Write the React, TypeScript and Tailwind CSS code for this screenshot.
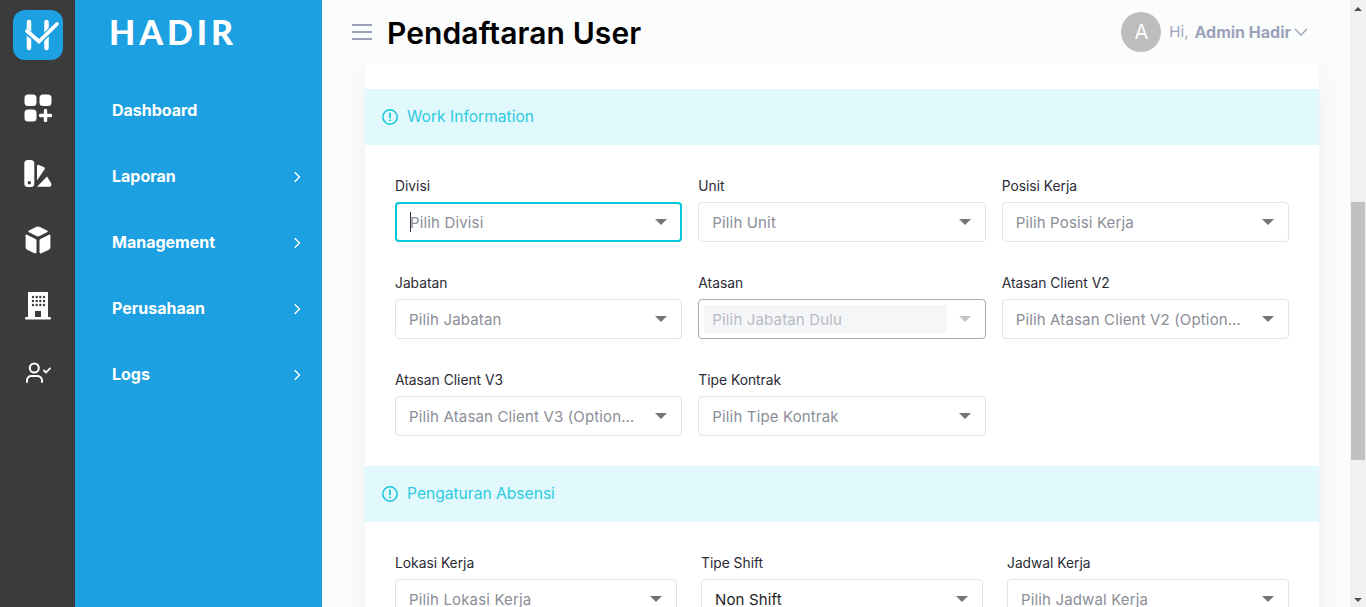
const font = { fontFamily: '"Inter", "Noto Sans", sans-serif' };

function Select({ label, text, focus, disabled, value }: { label: string; text: string; focus?: boolean; disabled?: boolean; value?: boolean }) {
  const box = focus
    ? "border-2 border-[#00c5dc] pl-[13px] pr-[13px]"
    : disabled
      ? "border border-[#a8abb2] pl-[5px] pr-[14px]"
      : "border border-[#e2e3ea] pl-[13px] pr-[14px]";
  return (
    <div className="flex min-w-0 flex-col">
      <label className="mb-[5px] h-[20px] text-[13.8px] leading-[19px] text-[#2b2b35]">{label}</label>
      <div className={`flex h-[40px] items-center rounded-[4px] bg-white ${box}`}>
        {focus && <span className="-mr-px h-[20px] w-px bg-[#333]" />}
        <span
          className={`min-w-0 flex-1 truncate pt-[2px] text-[15px] tracking-[0.15px] ${
            disabled
              ? "mr-[6px] flex h-[28px] items-center rounded-[2px] bg-[#f5f6f8] pl-[8px] text-[#b9bcc5]"
              : value
                ? "text-[#1e1e22]"
                : "text-[#8b8e97]"
          }`}
        >
          {text}
        </span>
        <svg width="12" height="6" viewBox="0 0 12 6" className={`shrink-0 ${disabled ? "ml-[6px]" : "ml-[20px]"}`}>
          <path d="M0 0h12L6 6z" fill={disabled ? "#c4c4c4" : "#757575"} />
        </svg>
      </div>
    </div>
  );
}

function SectionHead({ title }: { title: string }) {
  return (
    <div className="flex h-[56px] items-center gap-[9px] bg-[#e1f9fc] pb-[1px] pl-[17px]">
      <svg width="16" height="16" viewBox="0 0 16 16" fill="none" stroke="#17c6dc" strokeWidth="1.5" strokeLinecap="round">
        <circle cx="8" cy="8" r="7.2" />
        <path d="M8 4.4v4.2" strokeWidth="1.7" />
        <path d="M8 11.4v.1" strokeWidth="1.9" />
      </svg>
      <span className="text-[15.6px] text-[#2ecbe0]">{title}</span>
    </div>
  );
}

const navItems = [
  { name: "Dashboard", sub: false },
  { name: "Laporan", sub: true },
  { name: "Management", sub: true },
  { name: "Perusahaan", sub: true },
  { name: "Logs", sub: true },
];

function RailIcon({ i }: { i: number }) {
  if (i === 0)
    return (
      <svg width="28" height="28" viewBox="0 0 28 28" fill="#fff">
        <rect x="0.5" y="0.5" width="12" height="11.5" rx="3.5" />
        <rect x="15.5" y="0.5" width="12" height="11.5" rx="3.5" />
        <rect x="0.5" y="15.5" width="12" height="12" rx="3.5" />
        <path d="M21.5 16.5v10M16.500 21.500h10" stroke="#fff" strokeWidth="3.4" strokeLinecap="round" />
      </svg>
    );
  if (i === 1)
    return (
      <svg width="28" height="28" viewBox="0 0 28 28" fill="#fff">
        <path fillRule="evenodd" d="M3.500 0h3A3.500 3.500 0 0 1 10 3.500v20A3.500 3.500 0 0 1 6.500 27h-3A3.500 3.500 0 0 1 0 23.500v-20A3.500 3.500 0 0 1 3.500 0zM5 21a1.700 1.700 0 1 0 0 3.400A1.700 1.700 0 0 0 5 21z" transform="translate(.3 0)" />
        <path d="M13 6.500c0-1.300 1-2 2-1.500l4.800 2c1 .5 1.300 1.400.8 2.300L13 20.500z" />
        <path d="M23 16.500l4 6.500c.3.500.4 1 .4 1.500v.2c0 1.200-.9 2.100-2.100 2.100H13z" />
      </svg>
    );
  if (i === 2)
    return (
      <svg width="28" height="28" viewBox="0 0 28 28" fill="#fff">
        <path d="M14 .5c.7 0 1.300.2 2 .5l7 3.500c1 .5 1 1.300 0 1.800l-7.500 3.800c-1 .5-2 .5-3 0L5 6.300c-1-.5-1-1.300 0-1.800l7-3.500c.7-.3 1.300-.5 2-.5z" />
        <path d="M2.500 8.500l9 4.500c.7.300 1 .9 1 1.600v11.400c0 1.200-.8 1.800-1.900 1.300l-7-3.200c-1.300-.6-2-1.600-2-3V9.500c0-1 .2-1.300.9-1z" />
        <path d="M25.500 8.500l-9 4.500c-.7.300-1 .9-1 1.600v11.400c0 1.200.8 1.800 1.900 1.300l7-3.200c1.300-.6 2-1.600 2-3V9.500c0-1-.2-1.300-.9-1z" />
      </svg>
    );
  if (i === 3)
    return (
      <svg width="28" height="28" viewBox="0 0 28 28" fill="#fff">
        <path fillRule="evenodd" d="M4 0h20v25H4zM11 19h6v6h-6z" />
        <rect x="1" y="25" width="26" height="2.500" rx="1.200" />
        <g fill="#3b3b3b">
          {[9, 12.7, 16.3, 20].flatMap((x) =>
            [5, 9, 13].map((y) => <circle key={`${x}-${y}`} cx={x} cy={y} r="1.200" />),
          )}
        </g>
      </svg>
    );
  return (
    <svg width="28" height="28" viewBox="0 0 28 28" fill="none" stroke="#fff" strokeWidth="2" strokeLinecap="round" strokeLinejoin="round">
      <circle cx="10.300" cy="10" r="4.500" />
      <path d="M3 24v-1.500c0-2.800 2-4.500 4.500-4.500h5.500c2.800 0 5 1.700 5 4.500V24" />
      <path d="M20 12.500l2 2 4-4.200" strokeWidth="1.800" />
    </svg>
  );
}

export default function App() {
  return (
    <div className="flex h-screen w-full overflow-hidden bg-[#fbfcfc]" style={font}>
      {/* rail */}
      <div className="flex w-[75px] shrink-0 flex-col items-center bg-[#3b3b3b] pt-[10px]">
        <div className="mb-[15px] flex h-[50px] w-[50px] items-center justify-center rounded-[12px] bg-[#1ca0e2]">
          <svg width="44" height="36" viewBox="0 0 44 36" fill="none" stroke="#fff" strokeLinecap="round">
            <path d="M13 5v26M30.500 5v26" strokeWidth="4.500" />
            <path d="M11 15l12 10L41 7" strokeWidth="6" stroke="#1ca0e2" />
            <path d="M11 14l12 10.500L41 7" strokeWidth="3.800" />
          </svg>
        </div>
        {[0, 1, 2, 3, 4].map((i) => (
          <div key={i} className="flex h-[66px] w-full items-center justify-center">
            <RailIcon i={i} />
          </div>
        ))}
      </div>

      {/* sidebar */}
      <div className="flex w-[247px] shrink-0 flex-col bg-[#1ca0e2] text-white">
        <div className="flex h-[65px] items-center pl-[34px] pb-[1px]">
          <span className="text-[34px] font-black leading-none tracking-[0.115em]" style={{ fontFamily: '"Lato", sans-serif' }}>
            HADIR
          </span>
        </div>
        <div className="flex flex-col pt-[13px]">
          {navItems.map((n) => (
            <div key={n.name} className="flex h-[66px] items-center justify-between pl-[37px] pr-[20px]">
              <span className="-mt-[2px] text-[16px] font-bold">{n.name}</span>
              {n.sub && (
                <svg width="10" height="12" viewBox="0 0 10 12" fill="none" stroke="#fff" strokeWidth="1.400" strokeLinecap="round" strokeLinejoin="round">
                  <path d="M3 1.500L7.500 6 3 10.500" />
                </svg>
              )}
            </div>
          ))}
        </div>
      </div>

      {/* main */}
      <div className="flex min-w-0 flex-1 flex-col">
        <header className="flex h-[64px] shrink-0 items-center bg-[#fbfcfc] pl-[30px] pr-[42px]">
          <div className="flex w-[20px] flex-col gap-[5px]">
            <span className="h-[2px] bg-[#9aa0b5]" />
            <span className="h-[2px] bg-[#9aa0b5]" />
            <span className="h-[2px] bg-[#9aa0b5]" />
          </div>
          <h1 className="ml-[15px] pt-[2px] text-[30px] font-semibold tracking-[0.1px] text-black">Pendaftaran User</h1>
          <div className="ml-auto flex items-center">
            <div className="flex h-[40px] w-[40px] items-center justify-center rounded-full bg-[#bdbdbd] text-[20px] text-white">A</div>
            <span className="ml-[8px] text-[15px] text-[#9ca3ba]">Hi,</span>
            <span className="ml-[6px] text-[16px] font-bold text-[#9ca3ba]">Admin Hadir</span>
            <svg width="14" height="8" viewBox="0 0 14 8" fill="none" stroke="#9ca3ba" strokeWidth="1.300" className="ml-[3px]">
              <path d="M1 1l6 6 6-6" />
            </svg>
          </div>
        </header>
        <div className="min-h-0 flex-1 overflow-hidden pl-[43px] pr-[31px]">
          <div className="bg-white pt-[25px] shadow-[0_0_30px_rgba(0,0,0,0.05)]">
            <SectionHead title="Work Information" />
            <div className="grid grid-cols-3 gap-x-[16px] gap-y-[32px] px-[30px] pt-[32px] pb-[30px]">
              <Select label="Divisi" text="Pilih Divisi" focus />
              <Select label="Unit" text="Pilih Unit" />
              <Select label="Posisi Kerja" text="Pilih Posisi Kerja" />
              <Select label="Jabatan" text="Pilih Jabatan" />
              <Select label="Atasan" text="Pilih Jabatan Dulu" disabled />
              <Select label="Atasan Client V2" text="Pilih Atasan Client V2 (Optional)" />
              <Select label="Atasan Client V3" text="Pilih Atasan Client V3 (Optional)" />
              <Select label="Tipe Kontrak" text="Pilih Tipe Kontrak" />
            </div>
            <SectionHead title="Pengaturan Absensi" />
            <div className="grid grid-cols-3 gap-x-[24px] px-[30px] pt-[32px] pb-[30px]">
              <Select label="Lokasi Kerja" text="Pilih Lokasi Kerja" />
              <Select label="Tipe Shift" text="Non Shift" value />
              <Select label="Jadwal Kerja" text="Pilih Jadwal Kerja" />
            </div>
          </div>
        </div>
      </div>

      {/* scrollbar */}
      <div className="flex w-[16px] shrink-0 flex-col items-center bg-[#f1f1f1]">
        <svg width="8" height="4" viewBox="0 0 8 4" className="mt-[7px]">
          <path d="M0 4h8L4 0z" fill="#505050" />
        </svg>
        <div className="mt-[191px] h-[258px] w-[14px] bg-[#c1c1c1]" />
        <svg width="8" height="4" viewBox="0 0 8 4" className="mt-auto mb-[5px]">
          <path d="M0 0h8L4 4z" fill="#505050" />
        </svg>
      </div>
    </div>
  );
}
